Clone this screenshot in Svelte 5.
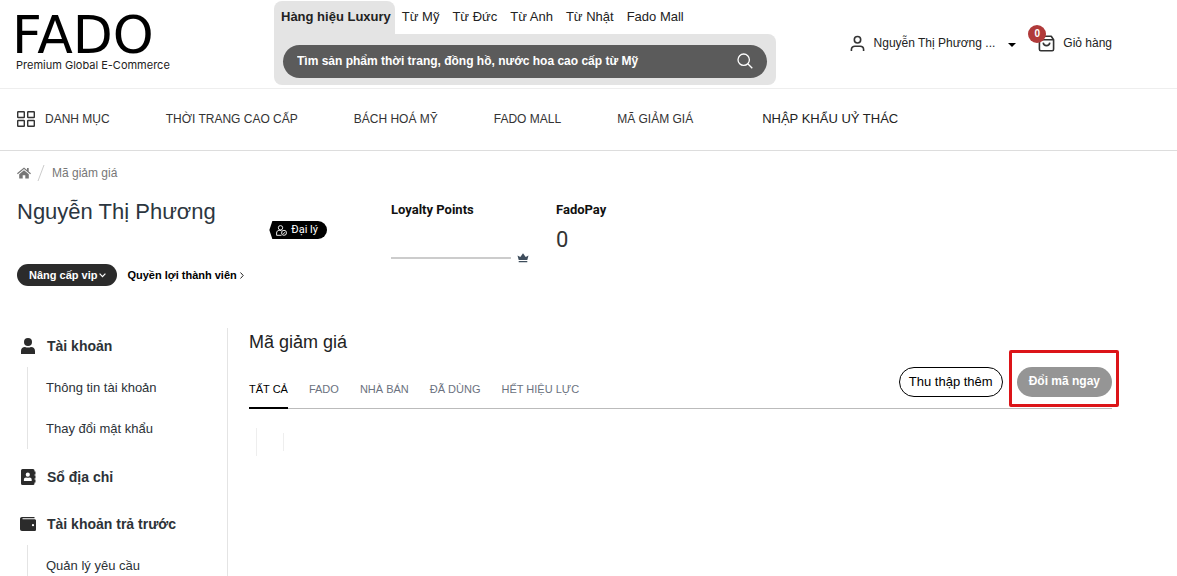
<script>
  let activeShop = $state('Hàng hiệu Luxury');
  let activeTab = $state('TẤT CẢ');
  let keyword = $state('');

  const shops = ['Hàng hiệu Luxury', 'Từ Mỹ', 'Từ Đức', 'Từ Anh', 'Từ Nhật', 'Fado Mall'];
  const navItems = ['THỜI TRANG CAO CẤP', 'BÁCH HOÁ MỸ', 'FADO MALL', 'MÃ GIẢM GIÁ'];
  const tabs = ['TẤT CẢ', 'FADO', 'NHÀ BÁN', 'ĐÃ DÙNG', 'HẾT HIỆU LỰC'];

  const menu = [
    { title: 'Tài khoản', icon: 'user', items: ['Thông tin tài khoản', 'Thay đổi mật khẩu'] },
    { title: 'Sổ địa chỉ', icon: 'book', items: [] },
    { title: 'Tài khoản trả trước', icon: 'wallet', items: ['Quản lý yêu cầu'] }
  ];
</script>

<div class="page">
  <header class="header">
    <a class="logo" href="#home">
      <span class="logo-name">FADO</span>
      <span class="logo-slogan">Premium Global E-Commerce</span>
    </a>

    <div class="search-area">
      <div class="shops">
        {#each shops as shop}
          <button class="shop" class:active={activeShop === shop} onclick={() => (activeShop = shop)}>{shop}</button>
        {/each}
      </div>
      <div class="search-wrap">
        <form class="search" onsubmit={(e) => e.preventDefault()}>
          <input
            type="text"
            aria-label="Tìm sản phẩm"
            placeholder="Tìm sản phẩm thời trang, đồng hồ, nước hoa cao cấp từ Mỹ"
            bind:value={keyword}
          />
          <button type="submit" aria-label="Tìm kiếm">
            <svg width="16" height="16" viewBox="0 0 16 16" fill="none" stroke="#fff" stroke-width="1.3">
              <circle cx="6.7" cy="6.7" r="5.7" />
              <path d="M10.8 10.8 15.3 15.3" />
            </svg>
          </button>
        </form>
      </div>
    </div>

    <div class="account">
      <button class="user">
        <svg width="15" height="17" viewBox="0 0 16 18" fill="none" stroke="#333" stroke-width="1.7">
          <circle cx="8" cy="5" r="3.4" />
          <path d="M1.5 17v-1.5c0-2.2 1.6-3.6 3.7-3.6h5.6c2.1 0 3.7 1.4 3.7 3.6V17" />
        </svg>
        <span class="user-name">Nguyễn Thị Phương ...</span>
        <svg class="caret" width="8" height="4" viewBox="0 0 8 4"><path d="M0 0h8L4 4z" fill="#000" /></svg>
      </button>
      <a class="cart" href="#cart">
        <span class="cart-icon">
          <svg width="17" height="17" viewBox="0 0 18 18" fill="none" stroke="#333" stroke-width="1.7" stroke-linejoin="round">
            <path d="M1.5 5 4 1.3h10L16.5 5v10.2c0 1-.6 1.5-1.5 1.5H3c-.9 0-1.5-.5-1.5-1.5z" />
            <path d="M1.5 5h15M5.5 8c.3 2.2 1.6 3.3 3.5 3.3s3.2-1.1 3.5-3.3" />
          </svg>
          <span class="badge">0</span>
        </span>
        Giỏ hàng
      </a>
    </div>
  </header>

  <nav class="nav">
    <a class="category" href="#category">
      <svg width="18" height="16" viewBox="0 0 18 16" fill="none" stroke="#333" stroke-width="1.4">
        <rect x="0.7" y="0.7" width="6.6" height="5.8" rx=".5" />
        <rect x="10.7" y="0.7" width="6.6" height="5.8" rx=".5" />
        <rect x="0.7" y="9.5" width="6.6" height="5.8" rx=".5" />
        <rect x="10.7" y="9.5" width="6.6" height="5.8" rx=".5" />
      </svg>
      DANH MỤC
    </a>
    {#each navItems as item}
      <a href="#nav">{item}</a>
    {/each}
    <a class="import" href="#import">NHẬP KHẨU UỶ THÁC</a>
  </nav>

  <div class="breadcrumb">
    <a href="#home" aria-label="Trang chủ">
      <svg width="14" height="12" viewBox="0 0 14 12" fill="#777">
        <path d="M7 .5 10 3V1h1.7v3.4L14 6.3l-.8.9L7 2.1.8 7.2 0 6.3z" />
        <path d="M7 3.3 11.8 7.2V11.5H8.3V8.2H5.7v3.3H2.2V7.2z" />
      </svg>
    </a>
    <svg width="8" height="18" viewBox="0 0 8 18" stroke="#ccc" fill="none"><path d="M7 1 1 17" /></svg>
    <span>Mã giảm giá</span>
  </div>

  <section class="profile">
    <div class="member">
      <div class="member-top">
        <h1>Nguyễn Thị Phương</h1>
        <span class="agent">
          <svg width="11" height="11" viewBox="0 0 11 11" fill="none" stroke="#fff" stroke-width=".9">
            <circle cx="4.5" cy="2.8" r="2.2" />
            <path d="M5.5 10.3H.6V8c0-1.6 1-2.6 2.6-2.6h2.2" />
            <circle cx="8" cy="7.8" r="2.5" />
            <path d="m6.9 7.8.8.8 1.4-1.5" />
          </svg>
          Đại lý
        </span>
      </div>
      <div class="member-links">
        <button class="upgrade">
          Nâng cấp vip
          <svg width="7" height="5" viewBox="0 0 7 5" fill="none" stroke="#fff" stroke-width="1.2"><path d="m.6.7 2.9 3 2.9-3" /></svg>
        </button>
        <a href="#benefit">
          Quyền lợi thành viên
          <svg width="4" height="7" viewBox="0 0 4 7" fill="none" stroke="#222"><path d="m.5.5 2.7 3-2.7 3" /></svg>
        </a>
      </div>
    </div>

    <div class="points">
      <h2>Loyalty Points</h2>
      <div class="progress">
        <span class="track"></span>
        <svg width="12" height="10" viewBox="0 0 12 10" fill="#3e4d5c">
          <path d="M.5 2.4 3.3 4 6 .3 8.700 4l2.800-1.600L10.300 7H1.700zM1.700 8h8.600v1.300H1.700z" />
        </svg>
      </div>
    </div>

    <div class="pay">
      <h2>FadoPay</h2>
      <div class="amount">0</div>
    </div>
  </section>

  <div class="content">
    <aside class="sidebar">
      {#each menu as group}
        <div class="group">
          <a class="group-title" href="#group">
            {#if group.icon === 'user'}
              <svg width="16" height="16" viewBox="0 0 16 16" fill="#2b2b2b">
                <circle cx="8" cy="4" r="4" />
                <path d="M1 16v-3c0-2.4 1.7-4 4-4 1.9.8 4.1.8 6 0 2.3 0 4 1.6 4 4v3z" />
              </svg>
            {:else if group.icon === 'book'}
              <svg width="16" height="16" viewBox="0 0 16 16">
                <path d="M2.5 0H13a1.5 1.5 0 0 1 1.5 1.5v1h1v3h-1v1h1v3h-1v1h1v3h-1v1A1.5 1.5 0 0 1 13 16H2.5A1.5 1.5 0 0 1 1 14.5v-13A1.5 1.5 0 0 1 2.5 0z" fill="#2b2b2b" />
                <circle cx="7.8" cy="5.7" r="2.1" fill="#fff" />
                <path d="M3.9 12v-1.3c0-1.3.9-2.2 2.2-2.2 1.1.4 2.3.4 3.4 0 1.2 0 2.2.9 2.2 2.2V12z" fill="#fff" />
              </svg>
            {:else}
              <svg width="16" height="16" viewBox="0 0 16 16">
                <path d="M2 1h12.5v1.3h-12v.9h12c.9 0 1.5.6 1.5 1.4v8.8c0 .9-.6 1.6-1.5 1.600H2c-1.200 0-2-.8-2-2V3c0-1.200.8-2 2-2z" fill="#2b2b2b" />
                <circle cx="13" cy="9.2" r="1.1" fill="#fff" />
              </svg>
            {/if}
            {group.title}
          </a>
          {#if group.items.length}
            <ul>
              {#each group.items as item}
                <li><a href="#item">{item}</a></li>
              {/each}
            </ul>
          {/if}
        </div>
      {/each}
    </aside>

    <main class="main">
      <h2>Mã giảm giá</h2>
      <div class="toolbar">
        <div class="tabs">
          {#each tabs as tab}
            <button class="tab" class:active={activeTab === tab} onclick={() => (activeTab = tab)}>{tab}</button>
          {/each}
        </div>
        <div class="actions">
          <button class="collect">Thu thập thêm</button>
          <div class="highlight">
            <button class="redeem">Đổi mã ngay</button>
          </div>
        </div>
      </div>
      <div class="coupon">
        <span class="edge"></span>
        <span class="edge short"></span>
      </div>
    </main>
  </div>
</div>

<style>
  :global(body) {
    margin: 0;
    background: #fff;
    overflow: hidden;
  }

  .page {
    font-family: 'Liberation Sans', Arial, sans-serif;
    font-size: 12px;
    line-height: 16px;
    color: #333;
    height: 100vh;
    overflow: hidden;
  }

  .page * {
    box-sizing: border-box;
  }

  a {
    color: inherit;
    text-decoration: none;
  }

  button {
    font-family: inherit;
    border: none;
    background: none;
    padding: 0;
    cursor: pointer;
  }

  h1,
  h2,
  ul {
    margin: 0;
    padding: 0;
    font-weight: normal;
  }

  svg {
    flex: none;
  }

  /* Header */
  .header {
    display: flex;
    height: 89px;
    padding: 0 65px 0 16px;
    border-bottom: 1px solid #eee;
  }

  .logo {
    display: flex;
    flex-direction: column;
    width: 258px;
    padding-top: 13px;
    color: #000;
  }

  .logo-name {
    margin-left: -4px;
    font-family: 'DejaVu Sans', sans-serif;
    font-size: 52px;
    line-height: 44px;
  }

  .logo-slogan {
    font-family: Inter, sans-serif;
    font-size: 11px;
    line-height: 16px;
    color: #222;
  }

  .search-area {
    flex: 0 1 502px;
    padding-top: 1px;
  }

  .shops {
    display: flex;
    gap: 13px;
  }

  .shop {
    height: 33px;
    padding-bottom: 2px;
    font-size: 13px;
    color: #222;
    white-space: nowrap;
  }

  .shop.active {
    margin-right: -6px;
    padding: 0 4px 2px 7px;
    font-weight: bold;
    background: #e4e4e4;
    border-radius: 8px 8px 0 0;
  }

  .search-wrap {
    padding: 11px 9px 7px;
    background: #e4e4e4;
    border-radius: 0 8px 8px 8px;
  }

  .search {
    display: flex;
    align-items: center;
    height: 33px;
    padding: 0 14px 2px;
    border-radius: 17px;
    background: #5b5b5b;
  }

  .search input {
    flex: 1;
    padding: 0;
    border: none;
    outline: none;
    background: none;
    color: #fff;
    font-family: inherit;
    font-size: 12px;
    font-weight: bold;
  }

  .search input::placeholder {
    color: #fff;
    opacity: 1;
  }

  .search button {
    display: flex;
  }

  .account {
    display: flex;
    align-items: center;
    gap: 22px;
    height: 86px;
    margin-left: auto;
  }

  .user {
    display: flex;
    align-items: center;
    gap: 9px;
    font-size: 12px;
    color: #222;
  }

  .caret {
    margin: 4px 0 0 4px;
  }

  .cart {
    display: flex;
    align-items: center;
    gap: 8px;
    color: #222;
  }

  .cart-icon {
    display: flex;
    position: relative;
  }

  .badge {
    position: absolute;
    top: -10px;
    left: -10px;
    width: 18px;
    border-radius: 9px;
    background: #b03a3a;
    color: #fff;
    font-size: 10px;
    font-weight: bold;
    line-height: 18px;
    text-align: center;
  }

  /* Category bar */
  .nav {
    display: flex;
    align-items: center;
    gap: 56px;
    height: 62px;
    padding: 0 17px 2px;
    border-bottom: 1px solid #ddd;
    white-space: nowrap;
  }

  .category {
    display: flex;
    align-items: center;
    gap: 10px;
  }

  .import {
    margin-left: 13px;
    font-size: 13px;
    color: #222;
  }

  .breadcrumb {
    display: flex;
    align-items: center;
    gap: 6px;
    padding: 13px 17px 0;
    color: #777;
  }

  .breadcrumb span {
    margin-left: 1px;
  }

  .breadcrumb a {
    display: flex;
  }

  /* Member summary */
  .profile {
    display: flex;
    padding: 16px 17px 0;
  }

  .member {
    width: 374px;
  }

  .member-top {
    display: flex;
    justify-content: space-between;
    height: 66px;
    padding-right: 64px;
  }

  h1 {
    font-size: 22px;
    line-height: 28px;
    color: #2c3640;
  }

  .agent {
    display: flex;
    align-items: center;
    gap: 4px;
    height: 18px;
    margin-top: 23px;
    padding: 0 9px 0 7px;
    border-radius: 0 9px 9px 0;
    /* pointed left side */
    clip-path: polygon(0 50%, 3px 0, 100% 0, 100% 100%, 3px 100%);
    background: #000;
    color: #fff;
    font-family: Roboto, sans-serif;
    font-size: 11px;
  }

  .member-links {
    display: flex;
    align-items: center;
    gap: 10px;
    color: #000;
    font-size: 11px;
    font-weight: bold;
  }

  .member-links a {
    display: flex;
    align-items: center;
    gap: 3px;
  }

  .upgrade {
    display: flex;
    align-items: center;
    gap: 2px;
    height: 22px;
    padding: 0 11px 0 12px;
    border-radius: 11px;
    background: #2b2b2b;
    color: #fff;
    font-size: 11px;
    font-weight: bold;
  }

  .points {
    width: 165px;
  }

  .profile h2 {
    padding-top: 4px;
    font-family: Roboto, sans-serif;
    font-size: 13px;
    font-weight: bold;
    line-height: 16px;
    color: #111;
  }

  .progress {
    display: flex;
    align-items: center;
    gap: 6px;
    margin-top: 35px;
  }

  .track {
    width: 120px;
    height: 2px;
    background: #ccc;
  }

  .amount {
    margin-top: 9px;
    font-family: Roboto, sans-serif;
    font-size: 22px;
    line-height: 26px;
  }

  /* Sidebar */
  .content {
    display: flex;
    padding: 42px 65px 0 17px;
  }

  .sidebar {
    width: 211px;
    border-right: 1px solid #e4e4e4;
    padding: 7px 0 0 3px;
    color: #2c3237;
  }

  .group {
    padding-bottom: 15px;
  }

  .group-title {
    display: flex;
    align-items: center;
    gap: 11px;
    height: 21px;
    font-size: 14px;
    font-weight: bold;
  }

  .group ul {
    margin: 11px 0 2px 7px;
    border-left: 1px solid #e4e4e4;
    list-style: none;
  }

  .group li {
    padding: 0 0 0 18px;
    font-size: 13px;
    line-height: 41px;
  }

  .group:nth-child(2) {
    padding-bottom: 26px;
  }

  /* Coupons */
  .main {
    flex: 1;
    padding-left: 21px;
  }

  .main h2 {
    font-size: 18px;
    line-height: 28px;
    color: #222;
  }

  .toolbar {
    display: flex;
    justify-content: space-between;
    align-items: flex-end;
    height: 53px;
    border-bottom: 1px solid #bbb;
  }

  .tabs {
    display: flex;
    gap: 21px;
    margin-bottom: -1px;
  }

  .tab {
    height: 38px;
    border-bottom: 2px solid transparent;
    font-size: 11px;
    color: #6b7280;
  }

  .tab.active {
    border-bottom-color: #000;
    color: #000;
  }

  .actions {
    display: flex;
    align-items: flex-end;
    gap: 6px;
    margin-right: -7px;
  }

  .collect,
  .redeem {
    height: 30px;
    border-radius: 15px;
  }

  .collect {
    margin-bottom: 11px;
    padding: 0 9px 2px;
    border: 1px solid #000;
    font-size: 13px;
    color: #000;
  }

  .highlight {
    display: flex;
    margin-bottom: 1px;
    padding: 14px 4px 7px 5px;
    border: 3px solid #dc1418;
    border-radius: 2px;
  }

  .redeem {
    padding: 0 12px 2px;
    background: #959595;
    color: #fff;
    font-size: 12px;
    font-weight: bold;
  }

  .coupon {
    display: flex;
    align-items: center;
    gap: 26px;
    padding: 19px 7px;
  }

  .edge {
    width: 1px;
    height: 28px;
    background: #eee;
  }

  .edge.short {
    height: 18px;
  }
</style>
